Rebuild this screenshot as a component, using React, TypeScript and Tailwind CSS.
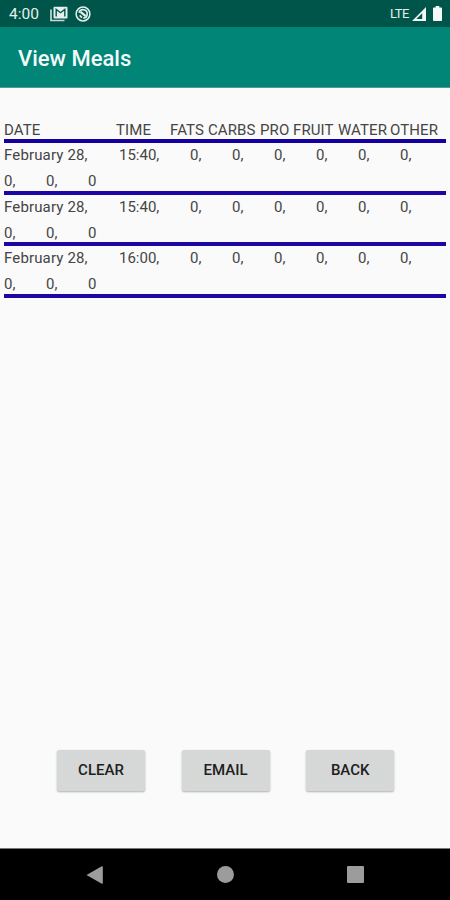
import React from 'react';

interface Meal {
    id: number;
    date: string;
    time: string;
    servings: string[];
    extras: string[];
}

const meals: Meal[] = [
    { id: 1, date: 'February 28,', time: '15:40,', servings: ['0,', '0,', '0,', '0,', '0,', '0,'], extras: ['0,', '0,', '0'] },
    { id: 2, date: 'February 28,', time: '15:40,', servings: ['0,', '0,', '0,', '0,', '0,', '0,'], extras: ['0,', '0,', '0'] },
    { id: 3, date: 'February 28,', time: '16:00,', servings: ['0,', '0,', '0,', '0,', '0,', '0,'], extras: ['0,', '0,', '0'] },
];

const headers = ['DATE', 'TIME', 'FATS', 'CARBS', 'PRO', 'FRUIT', 'WATER', 'OTHER'];

const actions = ['CLEAR', 'EMAIL', 'BACK'];

const StatusBar = () => (
    <div className="h-[27px] shrink-0 bg-[#00554a] flex items-center pl-[9px] pr-[8px] text-[#e4efed]">
        <span className="w-[41px] text-[15.5px] leading-[27px] pt-px">4:00</span>
        {/* Mail notification */}
        <svg className="w-[18px] h-[16px]" viewBox="0 0 18 16" fill="none">
            <path d="M1 3.5V14.5H14.5" stroke="#c5dbd7" strokeWidth="1.7" />
            <rect x="3.5" y="0.7" width="14" height="11.8" rx="1" fill="#e4efed" />
            <path d="M6.2 10.5V3.5L10.5 6.7L14.8 3.5V10.5" stroke="#00554a" strokeWidth="1.4" />
        </svg>
        {/* Sync notification */}
        <svg className="ml-[7px] w-[16px] h-[16px]" viewBox="0 0 16 16" fill="none" stroke="#e4efed">
            <circle cx="8" cy="8" r="6.9" strokeWidth="1.5" />
            <path d="M4 6.7A4.2 4.2 0 1 1 8.3 12.1M4.6 9.4L7 11.6" strokeWidth="1.6" />
            <path d="M5.5 5.8L10.7 10.2" strokeWidth="2.3" />
        </svg>
        <span className="ml-auto text-[13px] leading-[27px] tracking-[-0.5px]">LTE</span>
        <svg className="ml-[3px] w-[14px] h-[14px]" viewBox="0 0 14 14">
            <path fillRule="evenodd" d="M14 0V14H0ZM10.2 6.2L4.3 12.1H10.2Z" fill="#f2f8f7" />
        </svg>
        <svg className="ml-[7px] w-[9px] h-[15px]" viewBox="0 0 9 15" fill="#f5faf9">
            <path d="M2.7 0H6.3V1.5H8.2Q9 1.5 9 2.3V14.2Q9 15 8.2 15H.8Q0 15 0 14.2V2.3Q0 1.5 .8 1.5H2.7Z" />
        </svg>
    </div>
);

const MealRow = ({ meal }: { meal: Meal }) => (
    <div className="h-[51.7px] border-b-4 border-[#1c06a4]">
        <div className="grid grid-cols-[115px_71px_42px_42px_42px_42px_42px_42px] h-[24px] leading-[25px] whitespace-nowrap">
            <span className="tracking-[0.15px]">{meal.date}</span>
            <span>{meal.time}</span>
            {meal.servings.map((value, i) => (
                <span key={i}>{value}</span>
            ))}
        </div>
        <div className="flex h-[23px] leading-[28px]">
            {meal.extras.map((value, i) => (
                <span key={i} className="w-[42px]">{value}</span>
            ))}
        </div>
    </div>
);

const App = () => {
    return (
        <div className="w-[450px] h-[900px] flex flex-col overflow-hidden bg-[#fafafa] font-[Roboto,sans-serif]">
            <StatusBar />
            <header className="h-[61px] shrink-0 bg-[#008577] border-b border-[#4d9b92] flex items-center pl-[18px] pt-[3px]">
                <h1 className="text-[22px] font-medium text-[#f3faf9]">View Meals</h1>
            </header>

            <main className="grow flex flex-col">
                <section className="ml-1 mr-[4px] pt-[31px] text-[15px] text-[#454545]">
                    <div className="h-[24px] border-b-4 border-[#1400a0] grid grid-cols-[112px_54px_38px_52px_33px_45px_52px_56px] leading-[22px] whitespace-nowrap">
                        {headers.map(header => (
                            <span key={header} className="tracking-[0.1px]">{header}</span>
                        ))}
                    </div>
                    {meals.map(meal => (
                        <MealRow key={meal.id} meal={meal} />
                    ))}
                </section>

                <div className="mt-auto mb-[57px] ml-[57px] flex gap-[36.6px]">
                    {actions.map(action => (
                        <button
                            key={action}
                            className="w-[88px] h-[41px] rounded-[2px] bg-[#d6d8d7] text-[15px] font-medium text-[#202020] shadow-[0_1px_2px_rgba(0,0,0,0.3)]"
                        >
                            {action}
                        </button>
                    ))}
                </div>
            </main>

            <nav className="h-[52px] shrink-0 bg-black border-t border-[#777777] flex items-center pl-[86px] text-[#9c9c9c]">
                <svg className="w-[17px] h-[18px]" viewBox="0 0 17 18" fill="currentColor">
                    <path d="M.5 9L15.8 .3Q16.8 0 16.8 1V17Q16.8 18 15.8 17.7Z" />
                </svg>
                <span className="ml-[114px] w-[17px] h-[17px] rounded-full bg-current" />
                <span className="ml-[113px] w-[17px] h-[17px] rounded-[1px] bg-current" />
            </nav>
        </div>
    );
};

export default App;
